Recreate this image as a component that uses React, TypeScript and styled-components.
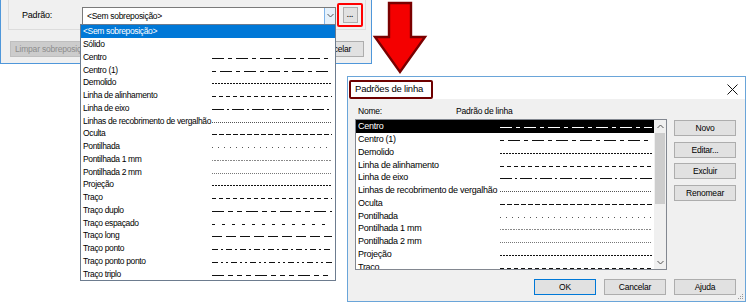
import React from 'react';
import styled, { createGlobalStyle } from 'styled-components';

const GlobalStyle = createGlobalStyle`
  html, body {
    margin: 0;
    padding: 0;
    background: #ffffff;
  }
  body {
    width: 750px;
    height: 308px;
    overflow: hidden;
    font-family: "Liberation Sans", Arial, sans-serif;
  }
`;

interface Pattern {
  name: string;
  dash: string | null;
  color?: string;
}

const PATTERNS: Pattern[] = [
  { name: 'Centro', dash: '12 4 4 4' },
  { name: 'Centro (1)', dash: '4 4 12 4' },
  { name: 'Demolido', dash: '2 1' },
  { name: 'Linha de alinhamento', dash: '4 3' },
  { name: 'Linha de eixo', dash: '12 3 2 3' },
  { name: 'Linhas de recobrimento de vergalhão', dash: '1 1', color: '#555' },
  { name: 'Oculta', dash: '5 2' },
  { name: 'Pontilhada', dash: '1 5', color: '#555' },
  { name: 'Pontilhada 1 mm', dash: '1 0.6', color: '#888' },
  { name: 'Pontilhada 2 mm', dash: '1 1', color: '#777' },
  { name: 'Projeção', dash: '2 1' },
  { name: 'Traço', dash: '4 3' },
  { name: 'Traço duplo', dash: '12 4 5 4 5 4' },
  { name: 'Traço espaçado', dash: '3 7' },
  { name: 'Traço long', dash: '10 4' },
  { name: 'Traço ponto', dash: '6 3 2 3' },
  { name: 'Traço ponto ponto', dash: '6 3 2 3 2 3' },
  { name: 'Traço triplo', dash: '12 4 5 4 5 4 5 4' },
];

const DROP_ITEMS: Pattern[] = [
  { name: '<Sem sobreposição>', dash: null },
  { name: 'Sólido', dash: null },
  ...PATTERNS,
];

const LinePreview = ({ dash, width, color, light }: { dash: string | null; width: number; color?: string; light?: boolean }) => (
  <PreviewSvg width={width} height={12} viewBox={`0 0 ${width} 12`}>
    {dash && (
      <line
        x1={0}
        y1={7.5}
        x2={width}
        y2={7.5}
        stroke={light ? '#ffffff' : color || '#111'}
        strokeWidth={1}
        strokeDasharray={dash}
        shapeRendering="crispEdges"
      />
    )}
  </PreviewSvg>
);

const Chevron = ({ up }: { up?: boolean }) => (
  <svg width={7} height={5} viewBox="0 0 7 5">
    <path d={up ? 'M0.5 4 L3.5 1 L6.5 4' : 'M0.5 1 L3.5 4 L6.5 1'} fill="none" stroke="#555" strokeWidth={1} />
  </svg>
);

export default function App() {
  return (
    <>
      <GlobalStyle />
      <Canvas>
        <PropertiesWindow>
          <GroupBox>
            <FieldLabel>Padrão:</FieldLabel>
            <Combo>
              <ComboText>&lt;Sem sobreposição&gt;</ComboText>
              <ComboArrow>
                <Chevron />
              </ComboArrow>
            </Combo>
            <EllipsisMark>
              <EllipsisButton>...</EllipsisButton>
            </EllipsisMark>
          </GroupBox>
          <BottomRow>
            <WinButton $width={112} $align="left" disabled>Limpar sobreposição</WinButton>
            <WinButton $width={58}>Cancelar</WinButton>
          </BottomRow>
        </PropertiesWindow>

        <DropList>
          {DROP_ITEMS.map((p, i) => (
            <DropItem key={p.name} $active={i === 0}>
              <DropName>{p.name}</DropName>
              <LinePreview dash={p.dash} width={120} color={p.color} />
            </DropItem>
          ))}
        </DropList>

        <ArrowSvg width={56} height={76} viewBox="0 0 56 76">
          <polygon
            points="17,3 39,3 39,37 53,37 28,72 3,37 17,37"
            fill="#f40000"
            stroke="#7a0000"
            strokeWidth={2.4}
            strokeLinejoin="miter"
          />
        </ArrowSvg>

        <Dialog>
          <TitleBar>
            <TitleMark>Padrões de linha</TitleMark>
            <CloseGlyph width={11} height={11} viewBox="0 0 11 11">
              <path d="M0.5 0.5 L10.5 10.5 M10.5 0.5 L0.5 10.5" stroke="#111" strokeWidth={1} />
            </CloseGlyph>
          </TitleBar>
          <DialogBody>
            <ColumnHeader>
              <HeaderCell $width={98}>Nome:</HeaderCell>
              <HeaderCell>Padrão de linha</HeaderCell>
            </ColumnHeader>
            <MainRow>
              <ListBox>
                <ListRows>
                  {PATTERNS.slice(0, 12).map((p, i) => (
                    <ListRow key={p.name} $selected={i === 0}>
                      <ListName>{p.name}</ListName>
                      <LinePreview dash={p.dash} width={152} color={p.color} light={i === 0} />
                    </ListRow>
                  ))}
                </ListRows>
                <ScrollBar>
                  <ScrollArrow>
                    <Chevron up />
                  </ScrollArrow>
                  <ScrollTrack>
                    <ScrollThumb />
                  </ScrollTrack>
                  <ScrollArrow>
                    <Chevron />
                  </ScrollArrow>
                </ScrollBar>
              </ListBox>
              <ButtonColumn>
                <WinButton $width={62}>Novo</WinButton>
                <WinButton $width={62}>Editar...</WinButton>
                <WinButton $width={62}>Excluir</WinButton>
                <WinButton $width={62}>Renomear</WinButton>
              </ButtonColumn>
            </MainRow>
            <Footer>
              <WinButton $width={62} $default>OK</WinButton>
              <WinButton $width={62}>Cancelar</WinButton>
              <WinButton $width={62}>Ajuda</WinButton>
            </Footer>
          </DialogBody>
          <Grip width={8} height={8} viewBox="0 0 8 8">
            <rect x={6} y={2} width={1} height={1} fill="#999" />
            <rect x={4} y={4} width={1} height={1} fill="#999" />
            <rect x={6} y={4} width={1} height={1} fill="#999" />
            <rect x={2} y={6} width={1} height={1} fill="#999" />
            <rect x={4} y={6} width={1} height={1} fill="#999" />
            <rect x={6} y={6} width={1} height={1} fill="#999" />
          </Grip>
        </Dialog>
      </Canvas>
    </>
  );
}

const Canvas = styled.div`
  position: relative;
  width: 750px;
  height: 308px;
  overflow: hidden;
  background: #ffffff;
`;

const PropertiesWindow = styled.div`
  position: absolute;
  left: 0;
  top: 0;
  width: 370px;
  height: 63px;
  box-sizing: content-box;
  background: #f0f0f0;
  border-left: 1px solid #4f97da;
  border-right: 1px solid #4f97da;
  border-bottom: 1px solid #4f97da;
  display: flex;
  flex-direction: column;
`;

const GroupBox = styled.div`
  margin-left: 7px;
  width: 358px;
  height: 30px;
  box-sizing: border-box;
  border: 1px solid #dcdcdc;
  border-top: none;
  display: flex;
  align-items: center;
  padding-left: 13px;
`;

const FieldLabel = styled.span`
  width: 60px;
  font-size: 9px;
  letter-spacing: -0.2px;
  color: #000;
`;

const Combo = styled.div`
  width: 254px;
  height: 18px;
  box-sizing: border-box;
  background: #ffffff;
  border: 1px solid #7a7a7a;
  display: flex;
  align-items: stretch;
  margin-top: 2px;
`;

const ComboText = styled.span`
  flex: 1;
  font-size: 8.5px;
  letter-spacing: -0.3px;
  line-height: 16px;
  padding-left: 4px;
  color: #000;
`;

const ComboArrow = styled.span`
  width: 10px;
  background: #e5f1fb;
  border-left: 1px solid #7eb4ea;
  display: flex;
  align-items: center;
  justify-content: center;
`;

const EllipsisMark = styled.div`
  margin-left: 1px;
  width: 26px;
  height: 24px;
  box-sizing: border-box;
  border: 2.5px solid #ff0000;
  border-radius: 2px;
  display: flex;
  align-items: center;
  justify-content: center;
`;

const EllipsisButton = styled.div`
  width: 15px;
  height: 16px;
  box-sizing: border-box;
  background: #e1e1e1;
  border: 1px solid #adadad;
  font-size: 8px;
  font-weight: bold;
  line-height: 13px;
  text-align: center;
  color: #222;
`;

const BottomRow = styled.div`
  margin-top: 11px;
  padding: 0 7px 0 9px;
  display: flex;
  justify-content: space-between;
`;

const WinButton = styled.div<{ $width: number; disabled?: boolean; $default?: boolean; $align?: 'left' | 'center' }>`
  width: ${(p) => p.$width}px;
  height: 16px;
  box-sizing: border-box;
  background: ${(p) => (p.disabled ? '#cccccc' : '#e1e1e1')};
  border: 1px solid ${(p) => (p.disabled ? '#bfbfbf' : p.$default ? '#0078d7' : '#adadad')};
  color: ${(p) => (p.disabled ? '#8d8d8d' : '#000')};
  font-size: 8.5px;
  letter-spacing: -0.2px;
  line-height: 14px;
  text-align: ${(p) => p.$align || 'center'};
  padding-left: ${(p) => (p.$align === 'left' ? '4px' : '0')};
  white-space: nowrap;
  overflow: hidden;
`;

const DropList = styled.div`
  position: absolute;
  left: 80px;
  top: 24px;
  width: 256px;
  height: 257px;
  box-sizing: border-box;
  background: #ffffff;
  border: 1px solid #6d7c8f;
  display: flex;
  flex-direction: column;
`;

const DropItem = styled.div<{ $active?: boolean }>`
  height: 12.75px;
  display: flex;
  align-items: center;
  background: ${(p) => (p.$active ? '#0078d7' : 'transparent')};
  color: ${(p) => (p.$active ? '#ffffff' : '#000')};
  padding-left: 2px;
`;

const DropName = styled.span`
  width: 129px;
  font-size: 8.5px;
  letter-spacing: -0.35px;
  white-space: nowrap;
`;

const PreviewSvg = styled.svg`
  display: block;
  flex-shrink: 0;
`;

const ArrowSvg = styled.svg`
  position: absolute;
  left: 372px;
  top: 0;
`;

const Dialog = styled.div`
  position: absolute;
  left: 347px;
  top: 76px;
  width: 399px;
  height: 226px;
  box-sizing: border-box;
  background: #f0f0f0;
  border: 1px solid #6aa5d9;
  display: flex;
  flex-direction: column;
`;

const TitleBar = styled.div`
  height: 22px;
  flex-shrink: 0;
  background: #ffffff;
  display: flex;
  align-items: center;
  justify-content: space-between;
  padding: 0 7px 0 1px;
`;

const TitleMark = styled.div`
  width: 84px;
  height: 19px;
  margin-top: 3px;
  box-sizing: border-box;
  border: 2.5px solid #6e0000;
  border-radius: 2px;
  padding-left: 4px;
  font-size: 9.5px;
  letter-spacing: -0.2px;
  line-height: 14px;
  color: #000;
  white-space: nowrap;
`;

const CloseGlyph = styled.svg`
  display: block;
  margin-top: 3px;
`;

const DialogBody = styled.div`
  flex: 1;
  display: flex;
  flex-direction: column;
  padding: 6px 0 0 7px;
`;

const ColumnHeader = styled.div`
  height: 12px;
  display: flex;
  align-items: center;
  padding-left: 3px;
`;

const HeaderCell = styled.span<{ $width?: number }>`
  width: ${(p) => (p.$width ? `${p.$width}px` : 'auto')};
  font-size: 8.5px;
  letter-spacing: -0.2px;
  color: #000;
`;

const MainRow = styled.div`
  margin-top: 2px;
  display: flex;
  gap: 7px;
`;

const ListBox = styled.div`
  width: 312px;
  height: 151px;
  box-sizing: border-box;
  background: #ffffff;
  border: 1px solid #828790;
  display: flex;
  overflow: hidden;
`;

const ListRows = styled.div`
  flex: 1;
  display: flex;
  flex-direction: column;
  overflow: hidden;
`;

const ListRow = styled.div<{ $selected?: boolean }>`
  height: 12.75px;
  flex-shrink: 0;
  display: flex;
  align-items: center;
  padding-left: 2px;
  background: ${(p) => (p.$selected ? '#000000' : 'transparent')};
  color: ${(p) => (p.$selected ? '#ffffff' : '#000')};
  overflow: hidden;
`;

const ListName = styled.span`
  width: 142px;
  flex-shrink: 0;
  font-size: 9px;
  letter-spacing: -0.27px;
  white-space: nowrap;
`;

const ScrollBar = styled.div`
  width: 12px;
  flex-shrink: 0;
  background: #f0f0f0;
  display: flex;
  flex-direction: column;
`;

const ScrollArrow = styled.div`
  height: 13px;
  display: flex;
  align-items: center;
  justify-content: center;
`;

const ScrollTrack = styled.div`
  flex: 1;
  padding: 0 1px;
`;

const ScrollThumb = styled.div`
  height: 71px;
  background: #cdcdcd;
`;

const ButtonColumn = styled.div`
  margin-top: 1px;
  display: flex;
  flex-direction: column;
  gap: 5.5px;
`;

const Footer = styled.div`
  margin-top: 9px;
  display: flex;
  justify-content: flex-end;
  gap: 8px;
  padding-right: 9px;
`;

const Grip = styled.svg`
  position: absolute;
  right: 1px;
  bottom: 1px;
`;
